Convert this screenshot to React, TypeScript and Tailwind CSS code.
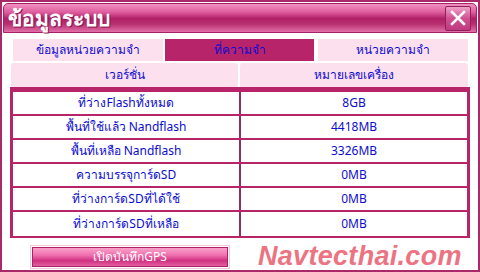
import React from "react"

const rows: [string, string][] = [
    ["ที่ว่างFlashทั้งหมด", "8GB"],
    ["พื้นที่ใช้แล้ว Nandflash", "4418MB"],
    ["พื้นที่เหลือ Nandflash", "3326MB"],
    ["ความบรรจุการ์ดSD", "0MB"],
    ["ที่ว่างการ์ดSDที่ได้ใช้", "0MB"],
    ["ที่ว่างการ์ดSDที่เหลือ", "0MB"],
]

const App = () => {
    return (
        <div
            className="w-[480px] h-[272px] bg-white border-2 border-[#a8286a] flex flex-col overflow-hidden text-[12px] text-[#0c0cd0]"
            style={{ fontFamily: "Tahoma, 'Noto Sans', 'Liberation Sans', sans-serif" }}
        >
            {/* title bar */}
            <div className="h-[32px] mt-[1px] mx-[1px] rounded-t-[5px] border border-[#a82068] bg-[linear-gradient(#f090c0_0%,#e060a0_28%,#b02068_52%,#b83070_72%,#e070a8_100%)] flex items-center justify-between pl-[4px] pr-[5px]">
                <span className="text-white font-bold text-[21px] leading-none [text-shadow:1px_1px_0_#8a1050]">ข้อมูลระบบ</span>
                <div className="w-[26px] h-[25px] border border-[#90205a] rounded-[2px] bg-[linear-gradient(#f0a0c8,#d05090_50%,#c03880)] flex items-center justify-center">
                    <svg width="16" height="16" viewBox="0 0 16 16">
                        <path d="M2 2 L14 14 M14 2 L2 14" stroke="white" strokeWidth="2.6" strokeLinecap="square" />
                    </svg>
                </div>
            </div>

            {/* tabs */}
            <div className="flex mt-[6px] pl-[11px] h-[23px]">
                <div className="w-[150px] bg-[#fde0ee] flex items-center justify-center">ข้อมูลหน่วยความจำ</div>
                <div className="w-[149px] ml-[2px] bg-[#b8246a] flex items-center justify-center">ที่ความจำ</div>
                <div className="w-[150px] ml-[4px] bg-[#fde0ee] flex items-center justify-center">หน่วยความจำ</div>
            </div>

            {/* header row */}
            <div className="flex mt-[2px] pl-[9px] h-[25px]">
                <div className="w-[227px] rounded-t-[3px] bg-[#fde0ee] flex items-center justify-center">เวอร์ชั่น</div>
                <div className="w-[228px] ml-[2px] rounded-t-[3px] bg-[#fde0ee] flex items-center justify-center">หมายเลขเครื่อง</div>
            </div>

            {/* table */}
            <div className="ml-[8px] w-[460px] border-t-[5px] border-x-[3px] border-b-[2px] border-[#b8246a] flex flex-col">
                {rows.map(([label, value], i) => (
                    <div key={i} className={`flex h-[24px] ${i < rows.length - 1 ? "border-b-2 border-[#b8246a]" : "h-[22px]"}`}>
                        <div className="w-[226px] flex items-center justify-center">{label}</div>
                        <div className="w-[2px] bg-[#8e2f68]"></div>
                        <div className="flex-1 flex items-center justify-center">{value}</div>
                    </div>
                ))}
            </div>

            {/* bottom */}
            <div className="flex items-center mt-[5px] pl-[28px]">
                <div className="w-[200px] h-[24px] border border-[#f8c4dc] p-[1px]">
                    <div className="h-full border border-[#b02068] bg-[linear-gradient(#f8a0c8_0%,#f070b0_40%,#d03080_70%,#e060a0_100%)] flex items-center justify-center text-white">
                        เปิดบันทึกGPS
                    </div>
                </div>
                <div
                    className="ml-[28px] text-[27px] font-bold italic text-[#ec7482] leading-none tracking-[0.3px]"
                    style={{ fontFamily: "'Liberation Sans', Arial, sans-serif" }}
                >
                    Navtecthai.com
                </div>
            </div>
        </div>
    )
}

export default App
